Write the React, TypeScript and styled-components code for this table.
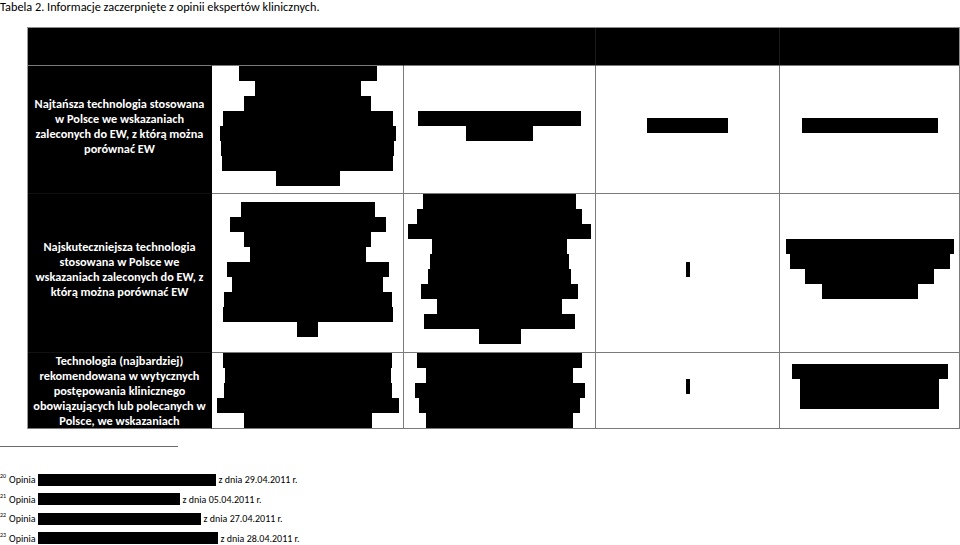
import React from "react";
import styled, { createGlobalStyle } from "styled-components";

//====////==== DANE ====\\\\====\\
type Wiersz = {
  etykieta: string[];
  komorki: number[][];
};

const wiersze: Wiersz[] = [
  {
    etykieta: [
      "Najtańsza technologia stosowana",
      "w Polsce we wskazaniach",
      "zaleconych do EW, z którą można",
      "porównać EW",
    ],
    komorki: [[138, 106, 127, 170, 176, 173, 171, 64], [163, 67], [81], [136]],
  },
  {
    etykieta: [
      "Najskuteczniejsza technologia",
      "stosowana w Polsce we",
      "wskazaniach zaleconych do EW, z",
      "którą można porównać EW",
    ],
    komorki: [
      [134, 156, 127, 116, 162, 151, 168, 170, 21],
      [153, 165, 183, 135, 139, 143, 157, 125, 151, 42],
      [4],
      [168, 160, 129, 96],
    ],
  },
  {
    etykieta: [
      "Technologia (najbardziej)",
      "rekomendowana w wytycznych",
      "postępowania klinicznego",
      "obowiązujących lub polecanych w",
      "Polsce, we wskazaniach",
    ],
    komorki: [[169, 166, 168, 182, 128], [165, 147, 170, 161, 147], [4], [156, 139, 139]],
  },
];

const przypisy = [
  { nr: 20, szer: 178, data: "z dnia 29.04.2011 r." },
  { nr: 21, szer: 142, data: "z dnia 05.04.2011 r." },
  { nr: 22, szer: 163, data: "z dnia 27.04.2011 r." },
  { nr: 23, szer: 180, data: "z dnia 28.04.2011 r." },
];

//====////==== KOMPONENT ====\\\\====\\
const App = () => {
  return (
    <Strona>
      <GlobalStyle />
      <Tytul>Tabela 2. Informacje zaczerpnięte z opinii ekspertów klinicznych.</Tytul>
      <Tabela>
        {[0, 1, 2, 3, 4].map((i) => (
          <Naglowek key={i} $kolumna={i} />
        ))}
        {wiersze.map((w, r) => (
          <React.Fragment key={r}>
            <Etykieta $ostatni={r === wiersze.length - 1}>
              {w.etykieta.map((linia) => (
                <Linia key={linia}>{linia}</Linia>
              ))}
            </Etykieta>
            {w.komorki.map((paski, c) => (
              <Komorka key={c}>
                {paski.map((s, k) => (
                  <Pasek key={k} style={{ width: s }} />
                ))}
              </Komorka>
            ))}
          </React.Fragment>
        ))}
      </Tabela>
      <Kreska />
      <Przypisy>
        {przypisy.map((p) => (
          <Przypis key={p.nr}>
            <Numer>{p.nr}</Numer>
            <Opinia>Opinia</Opinia>
            <PasekPrzypisu style={{ width: p.szer }} />
            <Data>{p.data}</Data>
          </Przypis>
        ))}
      </Przypisy>
    </Strona>
  );
};

//====////==== ESTILOS ====\\\\====\\
const GlobalStyle = createGlobalStyle`
  html, body {
    margin: 0;
    padding: 0;
    background: #fff;
  }
  body {
    font-family: "Carlito", "Lato", sans-serif;
    color: #000;
  }
`;

const Strona = styled.div`
  width: 960px;
  height: 545px;
  overflow: hidden;
`;

const Tytul = styled.div`
  height: 27px;
  font-size: 12.3px;
  line-height: 13px;
  white-space: nowrap;
`;

const Tabela = styled.div`
  display: grid;
  grid-template-columns: 184px 192px 192px 184px 180px;
  grid-template-rows: 38px 128px 159px 76px;
  width: max-content;
  margin-left: 27px;
  border-top: 1px solid #8c8c8c;
  border-left: 1px solid #9a9a9a;
`;

const kolorNaglowka = ["#000", "#000", "#1a1a1a", "#1a1a1a", "#8c8c8c"];

const Naglowek = styled.div<{ $kolumna: number }>`
  box-sizing: border-box;
  background: #000;
  border-bottom: 1px solid #7a7a7a;
  border-right: 1px solid ${(p) => kolorNaglowka[p.$kolumna]};
`;

const Etykieta = styled.div<{ $ostatni: boolean }>`
  box-sizing: border-box;
  display: flex;
  flex-direction: column;
  align-items: center;
  justify-content: safe center;
  padding-bottom: 8px;
  overflow: hidden;
  background: #000;
  color: #fff;
  border-right: 1px solid #000;
  border-bottom: 1px solid ${(p) => (p.$ostatni ? "#7a7a7a" : "#111")};
  font-size: 12.3px;
  font-weight: bold;
  line-height: 15px;
`;

const Linia = styled.span`
  white-space: nowrap;
`;

const Komorka = styled.div`
  box-sizing: border-box;
  display: flex;
  flex-direction: column;
  align-items: center;
  justify-content: safe center;
  padding-bottom: 8px;
  overflow: hidden;
  background: #fff;
  border-right: 1px solid #7a7a7a;
  border-bottom: 1px solid #7a7a7a;
`;

const Pasek = styled.span`
  display: block;
  flex-shrink: 0;
  height: 15px;
  background: #000;
`;

const Kreska = styled.div`
  width: 178px;
  height: 1px;
  margin-top: 17px;
  background: #6a6a6a;
`;

const Przypisy = styled.div`
  margin-top: 23px;
`;

const Przypis = styled.div`
  display: flex;
  align-items: center;
  height: 19.5px;
  font-size: 10px;
  white-space: nowrap;
`;

const Numer = styled.span`
  align-self: flex-start;
  margin-top: 3px;
  font-size: 6px;
  line-height: 6px;
`;

const Opinia = styled.span`
  margin-left: 3px;
`;

const PasekPrzypisu = styled.span`
  display: block;
  height: 12px;
  margin-left: 2px;
  background: #000;
`;

const Data = styled.span`
  margin-left: 3px;
`;

export default App;
